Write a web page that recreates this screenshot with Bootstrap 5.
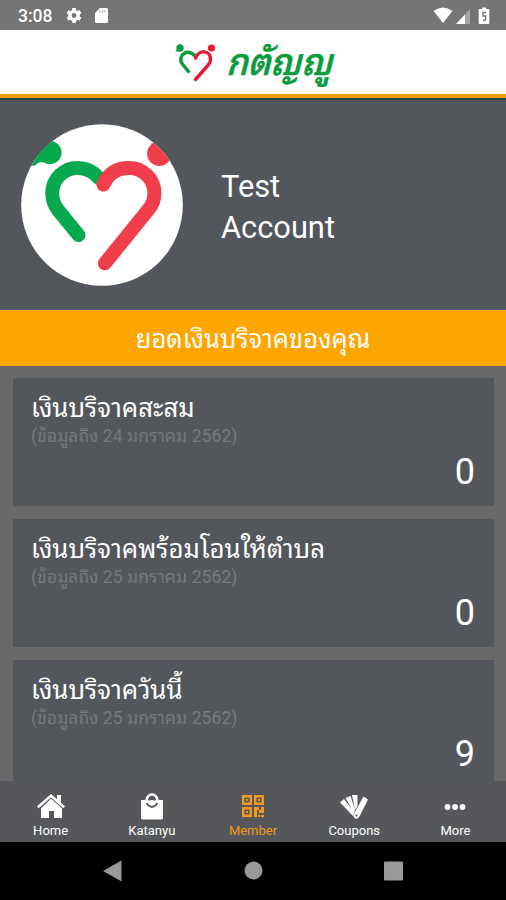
<!DOCTYPE html>
<html lang="th">
<head>
<meta charset="utf-8">
<meta name="viewport" content="width=device-width, initial-scale=1">
<title>Katanyu</title>
<link href="https://cdn.jsdelivr.net/npm/bootstrap@5.3.0/dist/css/bootstrap.min.css" rel="stylesheet">
<style>
body{font-family:Roboto,"Noto Sans Thai Looped",Loma,"Noto Sans Thai","Noto Sans",sans-serif;background:#696969;color:#fff}
svg{display:block;flex:none;overflow:visible}
.phone{width:506px;height:900px}
.status{height:30px;background:#757575;font-size:17.5px;font-weight:500;padding:2px 16px 0 18px}
.sys-left{margin-left:13px}
.brand{height:68px;border-bottom:4px solid #f39c12}
.profile{height:212px;background:#53565b;border-top:2px solid #27483f;padding-left:21px}
.who{font-size:30.8px;line-height:41px;margin-left:38px;padding-top:3px}
.banner{height:56px;background:#ffa500;font-size:25.6px;padding-top:3px}
.cards{padding:12px 12px 0 13px;gap:13px}
.tile{height:128px;background:#53575b;padding:14px 19px 0 18px;flex:none}
.tile h2{font-size:25.8px;line-height:32px;font-weight:400;margin:0;white-space:nowrap}
.tile small{font-size:17.5px;line-height:24px;color:#77797c;letter-spacing:.08px}
.amount{font-size:36px;line-height:40px;margin-top:4px}
.tabs{height:61px;background:#55575a;font-size:13px;line-height:16px;padding-top:12px}
.tabs .active{color:#f39a1c}
.keys{height:58px;background:#000}
</style>
</head>
<body>
<div class="phone d-flex flex-column overflow-hidden">
  <div class="status d-flex align-items-center flex-shrink-0">
    <span>3:08</span>
    <svg width="46" height="18" viewBox="65 7 46 18" class="sys-left"><g fill="#fff"><circle cx="74" cy="15.500" r="5.800"/><path d="M72.200 8h3.600v15h-3.600zM66.600 13.200l1.800-3.100 13 7.500-1.800 3.100zM68.400 20.700l-1.800-3.100 13-7.500 1.800 3.100z"/><path d="M100 8h6.500q1.500 0 1.500 1.500v12q0 1.500-1.500 1.500h-10q-1.500 0-1.500-1.500V13z"/></g><circle cx="74" cy="15.500" r="2.400" fill="#757575"/><path d="M100 10v2.500m2.500-2.500v2.500m2.500-2.500v2.500" stroke="#aaa"/></svg>
    <svg width="58" height="20" viewBox="432 5 58 20" class="ms-auto"><path d="M433.500 10Q443 3 452.500 10L443 22z" fill="#fff"/><path d="M470 8v15h-14z" fill="#a6a6a6"/><path d="M465 13.500V23h-9z" fill="#fff"/><path d="M482 6.500h4V8h2.500q.8 0 .8.800V22q0 1-1 1h-8.600q-1 0-1-1V8.800q0-.8.800-.8h2.500z" fill="#fff"/><path d="M486 11.500h-3v3.500h2.500v4h-2.500" fill="none" stroke="#757575" stroke-width="1.400"/></svg>
  </div>

  <header class="brand bg-white d-flex justify-content-center flex-shrink-0">
    <svg width="170" height="64" viewBox="168 30 170 64" role="img" aria-label="กตัญญู">
      <g fill="none" stroke-width="3.500" stroke-linecap="round"><path d="M188.500 71.500L182 63.500C177 55.500 188 47 195.500 56.500" stroke="#0b9c40"/><path d="M195.500 58C199 49 211 50 210.500 60C210.300 63 208.500 64.500 207 66.500L195.500 79.500" stroke="#e51b35"/></g>
      <circle cx="180" cy="48" r="3.700" fill="#0b9c40"/><path d="M175 51.500l5-5v5z" fill="#0b9c40"/><circle cx="211.500" cy="48" r="3.600" fill="#e51b35"/>
      <text transform="translate(226 75) skewX(-14)" font-size="37" font-weight="500" fill="#0b9c40" stroke="#0b9c40" stroke-width=".7" textLength="106" lengthAdjust="spacingAndGlyphs">กตัญญู</text>
    </svg>
  </header>

  <section class="profile d-flex align-items-center flex-shrink-0">
    <svg width="162" height="162" viewBox="63 69 487 487">
      <defs><clipPath id="disc"><circle cx="306.500" cy="312.500" r="243"/></clipPath></defs>
      <g clip-path="url(#disc)"><path fill="#fff" d="M63 69h487v487H63z"/>
      <g fill="none" stroke-width="42" stroke-linecap="round"><path stroke="#06a94d" d="M236 403L174 327Q157 305 157 277A76 76 0 0 1 233 201Q272 201 298 232"/><path stroke="#f13e4b" d="M311 251Q332 201 388 201A76 76 0 0 1 464 277Q464 305 447 325L315 488"/></g>
      <circle cx="150" cy="155" r="35" fill="#06a94d"/><path d="M85 196L145 115L155 180L128 184Q115 182 105 194z" fill="#06a94d"/><circle cx="479" cy="158" r="37" fill="#f13e4b"/></g>
    </svg>
    <div class="who">Test<br>Account</div>
  </section>

  <div class="banner d-flex align-items-center justify-content-center flex-shrink-0"><span>ยอดเงินบริจาคของคุณ</span></div>

  <main class="cards d-flex flex-column flex-grow-1 overflow-hidden">
    <article class="tile"><h2>เงินบริจาคสะสม</h2><small class="d-block">(ข้อมูลถึง 24 มกราคม 2562)</small><div class="amount text-end">0</div></article>
    <article class="tile"><h2>เงินบริจาคพร้อมโอนให้ตำบล</h2><small class="d-block">(ข้อมูลถึง 25 มกราคม 2562)</small><div class="amount text-end">0</div></article>
    <article class="tile"><h2>เงินบริจาควันนี้</h2><small class="d-block">(ข้อมูลถึง 25 มกราคม 2562)</small><div class="amount text-end">9</div></article>
  </main>

  <nav class="tabs row g-0 text-center flex-shrink-0">
    <div class="col d-flex flex-column align-items-center"><svg width="30" height="30" viewBox="0 1 30 30" fill="#fff"><path d="M15 2l6 5.200V3h4v7.700l4 3.600-1.600 2L15 5.500 2.600 16.300 1 14.300z"/><path d="M15 6.700l11 9.500V26h-8v-7h-5v7H5v-9.800z"/></svg><span>Home</span></div>
    <div class="col d-flex flex-column align-items-center"><svg width="30" height="30" viewBox="0 1 30 30"><path fill="#fff" d="M4 8h22v18q0 1.500-1.500 1.500h-19Q4 27.500 4 26z"/><path d="M9.500 9a5.500 6.500 0 0 1 11 0" fill="none" stroke="#fff" stroke-width="2.500"/><path d="M9.500 11q5.500 8 11 0M12 8.500q3-5 6 0" fill="none" stroke="#55575a" stroke-width="1.800"/></svg><span>Katanyu</span></div>
    <div class="col d-flex flex-column align-items-center active"><svg width="30" height="30" viewBox="0 1 30 30" fill="none" stroke="currentColor" stroke-width="2.400"><path d="M5.200 4.200h7.600v7.600H5.200zM17.200 4.200h7.600v7.600h-7.600zM5.200 16.200h7.600v7.600H5.200z"/><path stroke="none" fill="currentColor" d="M8 7h2v2H8zM20 7h2v2h-2zM8 19h2v2H8zM16 15h5v3h2v-3h3v6h-5v-3h-2v7h-3zM20 23h2v2h-2zM23 23h3v2h-3z"/></svg><span>Member</span></div>
    <div class="col d-flex flex-column align-items-center"><svg width="30" height="30" viewBox="0 1 30 30" fill="#fff"><path d="M1 10.500l4-3.500 10 13-1 4zM6.500 6l5-2 4.500 14-1 3zM13 3h5.500v11L16 18zM24.500 4.500l4.500 3-8.500 17q-2.500 3.500-5 1.500-2-2-.5-4.500z"/><circle cx="17.500" cy="23.500" r="1" fill="#55575a"/></svg><span>Coupons</span></div>
    <div class="col d-flex flex-column align-items-center"><svg width="30" height="30" viewBox="0 1 30 30" fill="#fff"><circle cx="7.500" cy="15" r="2.900"/><circle cx="15" cy="15" r="2.900"/><circle cx="22.500" cy="15" r="2.900"/></svg><span>More</span></div>
  </nav>

  <div class="keys flex-shrink-0"><svg width="506" height="58" viewBox="0 842 506 58" fill="#999"><path d="M121.500 860.500v21L103 871z"/><circle cx="253.500" cy="870.500" r="9"/><rect x="384" y="861.500" width="19" height="19" rx="1"/></svg></div>
</div>
<script src="https://cdn.jsdelivr.net/npm/bootstrap@5.3.0/dist/js/bootstrap.bundle.min.js"></script>
</body>
</html>
